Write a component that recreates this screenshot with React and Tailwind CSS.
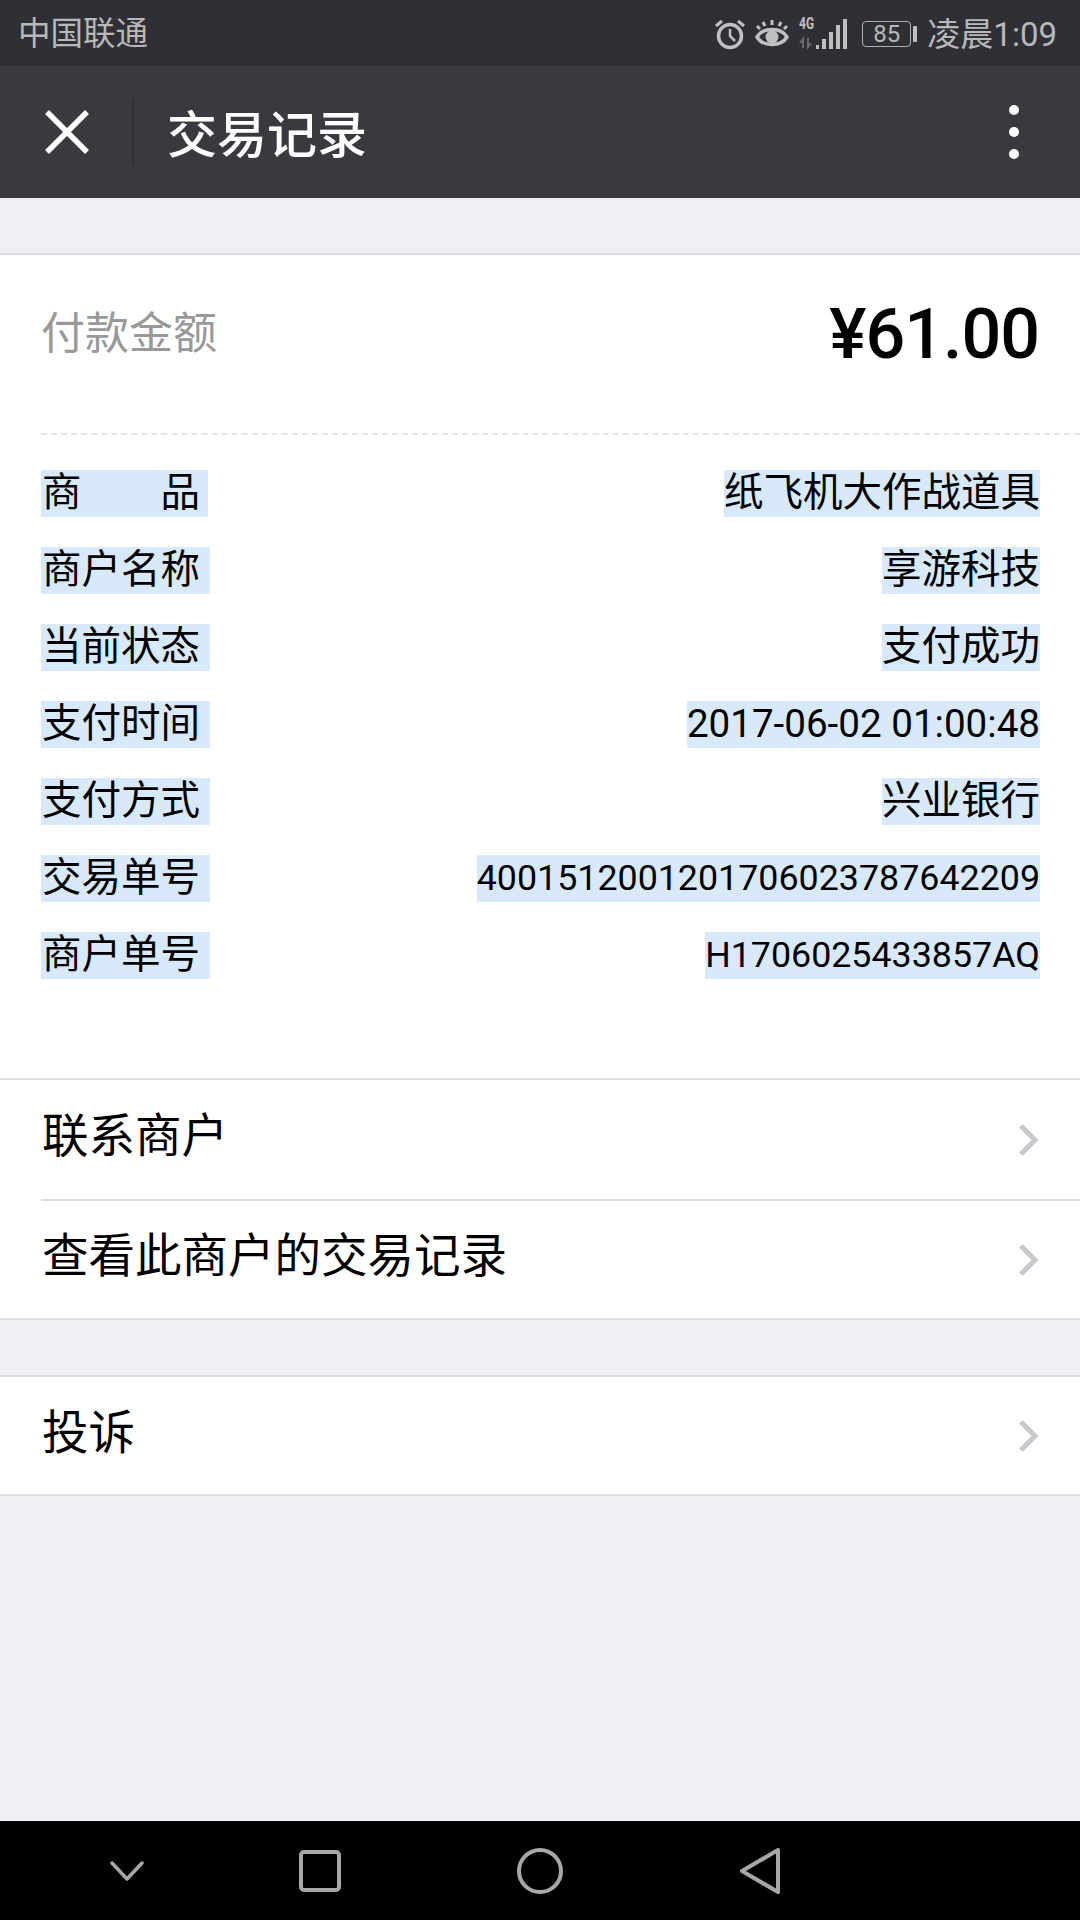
const CJK = '[font-family:Roboto,"Noto_Sans_CJK_SC",sans-serif]'

const ROWS = [
  { label: '商　　品', pad: 'pr-[8px]', value: '纸飞机大作战道具', size: 'text-[39.5px]' },
  { label: '商户名称', value: '享游科技', size: 'text-[39.5px]' },
  { label: '当前状态', value: '支付成功', size: 'text-[39.5px]' },
  { label: '支付时间', value: '2017-06-02 01:00:48', size: 'text-[38.6px]' },
  { label: '支付方式', value: '兴业银行', size: 'text-[39.5px]' },
  { label: '交易单号', value: '4001512001201706023787642209', size: 'text-[35.8px]' },
  { label: '商户单号', value: 'H1706025433857AQ', size: 'text-[35.8px]' },
]

function Chevron() {
  return (
    <svg width="22" height="32" viewBox="0 0 22 32" fill="none" className="shrink-0">
      <path d="M3 2 L17 16 L3 30" stroke="#c8c7cc" strokeWidth="5" />
    </svg>
  )
}

function StatusIcons() {
  return (
    <div className="flex items-center pt-[2px]">
      {/* alarm */}
      <svg width="32" height="32" viewBox="0 0 32 32" fill="none" stroke="#c0c0c0" strokeWidth="3.5">
        <circle cx="16" cy="18" r="11.5" />
        <path d="M16 11v7l5 5" strokeWidth="2.5" />
        <path d="M2 8l6-5M30 8l-6-5" strokeWidth="3" />
      </svg>
      {/* eye */}
      <svg width="34" height="30" viewBox="0 0 34 30" fill="none" stroke="#c0c0c0" className="ml-[9px]">
        <path d="M2 18 C8 8 26 8 32 18 C26 28 8 28 2 18Z" strokeWidth="3.5" />
        <circle cx="17" cy="18" r="6.5" fill="#c0c0c0" stroke="none" />
        <path d="M5 10L2 7M17 6V1M29 10l3-3M10 7L8 3M24 7l2-4" strokeWidth="3" />
      </svg>
      {/* 4G and signal */}
      <div className="relative ml-[10px] h-[32px] w-[49px]">
        <span className="absolute left-0 top-[-3px] origin-left scale-x-75 text-[16px] leading-[18px] font-bold text-[#c0c0c0] [font-family:Roboto,sans-serif]">4G</span>
        <svg width="49" height="32" viewBox="0 0 49 32" className="absolute left-0 top-0">
          <path d="M4 30V21l-3 4M9 20v9l3-4" stroke="#6a6a6c" strokeWidth="2" fill="none" />
          <rect x="17" y="27" width="3" height="4" fill="#c0c0c0" />
          <rect x="23" y="21" width="4" height="10" fill="#c0c0c0" />
          <rect x="30" y="14" width="4" height="17" fill="#c0c0c0" />
          <rect x="37" y="7" width="4" height="24" fill="#c0c0c0" />
          <rect x="44" y="1" width="4" height="30" fill="#c0c0c0" />
        </svg>
      </div>
      {/* battery */}
      <div className="ml-[14px] flex items-center">
        <div className="flex h-[26px] w-[49px] items-center justify-center rounded-[4px] border-[1.5px] border-[#b0b0b0] text-[24px] leading-none text-[#b8b8b8] [font-family:Roboto,sans-serif]">85</div>
        <div className="ml-[2px] h-[16px] w-[4px] rounded-[1px] bg-[#c0c0c0]" />
      </div>
    </div>
  )
}

export default function App() {
  return (
    <div className={`flex h-[1920px] w-[1080px] flex-col bg-[#efeff4] ${CJK}`}>
      {/* status bar */}
      <div className="flex h-[66px] shrink-0 items-center justify-between bg-[#2f3035] pl-[18px] pr-[23px]">
        <span className="pt-[3px] text-[32.5px] text-[#b8b8b8]">中国联通</span>
        <div className="flex items-center">
          <StatusIcons />
          <span className="ml-[10px] pt-[3px] text-[33px] text-[#b8b8b8]">凌晨1:09</span>
        </div>
      </div>

      {/* title bar */}
      <div className="flex h-[132px] shrink-0 items-center bg-[#393a3f] pl-[45px] pr-[61px]">
        <svg width="44" height="44" viewBox="0 0 44 44" fill="none" stroke="#fff" strokeWidth="5.5" className="shrink-0">
          <path d="M2 2 L42 42 M42 2 L2 42" />
        </svg>
        <div className="ml-[43px] h-[66px] w-[2px] bg-[#2f3035]" />
        <span className="ml-[33px] flex-1 pt-[8px] text-[50px] font-medium text-white">交易记录</span>
        <div className="flex flex-col gap-[12px]">
          <div className="h-[10px] w-[10px] rounded-full bg-white" />
          <div className="h-[10px] w-[10px] rounded-full bg-white" />
          <div className="h-[10px] w-[10px] rounded-full bg-white" />
        </div>
      </div>

      {/* detail card */}
      <div className="mt-[55px] h-[827px] border-y-2 border-[#dcdcdf] bg-white">
        <div className="flex h-[178px] items-center justify-between pb-[20px] pl-[41px] pr-[41px]">
          <span className="text-[44px] text-[#999]">付款金额</span>
          <span className="text-[70px] font-medium tracking-[-1px] text-black">¥61.00</span>
        </div>
        <div className="ml-[41px] border-t-2 border-dashed border-[#e6e6e6]" />
        <div className="flex flex-col gap-[30px] pl-[41px] pr-[40px] pt-[35px]">
          {ROWS.map(row => (
            <div key={row.label} className="flex h-[47px] items-center justify-between text-black">
              <span className={`h-[47px] bg-[#d8e9fc] pl-[1px] text-[39.5px] leading-[46px] ${row.pad || 'pr-[10px]'}`}>{row.label}</span>
              <span className={`h-[47px] bg-[#d8e9fc] leading-[46px] ${row.size}`}>{row.value}</span>
            </div>
          ))}
        </div>
      </div>

      {/* merchant links */}
      <div className="-mt-[2px] border-y-2 border-[#dcdcdf] bg-white">
        <div className="flex h-[119px] items-center justify-between pl-[42px] pr-[40px]">
          <span className="pb-[6px] text-[46.5px] text-black">联系商户</span>
          <Chevron />
        </div>
        <div className="ml-[41px] h-[2px] bg-[#dcdcdf]" />
        <div className="flex h-[117px] items-center justify-between pl-[42px] pr-[40px]">
          <span className="pb-[6px] text-[46.5px] text-black">查看此商户的交易记录</span>
          <Chevron />
        </div>
      </div>

      <div className="mt-[55px] border-y-2 border-[#dcdcdf] bg-white">
        <div className="flex h-[117px] items-center justify-between pl-[42px] pr-[40px]">
          <span className="pb-[4px] text-[46.5px] text-black">投诉</span>
          <Chevron />
        </div>
      </div>

      <div className="flex-1" />

      {/* android nav bar */}
      <div className="flex h-[99px] shrink-0 items-center bg-black pl-[110px]">
        <svg width="34" height="20" viewBox="0 0 34 20" fill="none" stroke="#a8a8a8" strokeWidth="3.5" strokeLinecap="round" strokeLinejoin="round">
          <path d="M2 2 L17 18 L32 2" />
        </svg>
        <svg width="42" height="42" viewBox="0 0 42 42" fill="none" stroke="#a8a8a8" strokeWidth="4" className="ml-[155px]">
          <rect x="2" y="2" width="38" height="38" rx="3" />
        </svg>
        <svg width="46" height="46" viewBox="0 0 46 46" fill="none" stroke="#a8a8a8" strokeWidth="4" className="ml-[176px]">
          <circle cx="23" cy="23" r="21" />
        </svg>
        <svg width="42" height="46" viewBox="0 0 42 46" fill="none" stroke="#a8a8a8" strokeWidth="4" strokeLinejoin="round" className="ml-[176px]">
          <path d="M39 2 L3 23 L39 44 Z" />
        </svg>
      </div>
    </div>
  )
}
